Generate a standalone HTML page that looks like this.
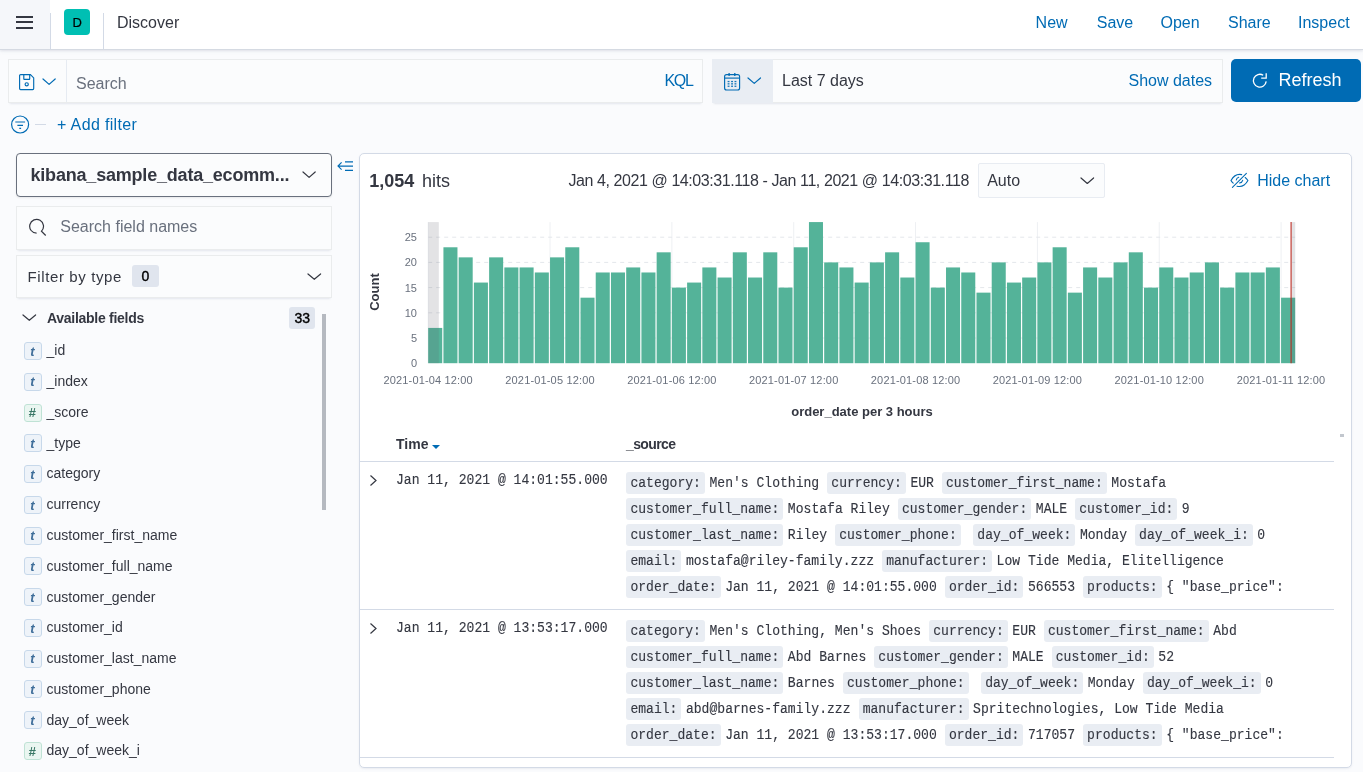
<!DOCTYPE html>
<html><head><meta charset="utf-8"><title>Discover - Kibana</title>
<style>
html,body{margin:0;padding:0;}
body{width:1363px;height:772px;overflow:hidden;position:relative;background:#FAFBFD;font-family:'Liberation Sans', sans-serif;}
</style></head><body>
<div id="root" style="position:absolute;left:0;top:0;width:1363px;height:772px;will-change:transform">
<div style="position:absolute;left:0;top:0;width:1363px;height:49px;background:#fff;border-bottom:1.5px solid #D5DAE2;box-shadow:0 1px 2px rgba(152,162,179,.2),0 2px 4px rgba(152,162,179,.08);z-index:2">
<div style="position:absolute;left:0;top:0;width:50px;height:49px;background:#F5F7FA;"></div>
<div style="position:absolute;left:50px;top:13px;width:1px;height:36px;background:#D3DAE6"></div>
<div style="position:absolute;left:103px;top:13px;width:1px;height:36px;background:#D3DAE6"></div>
<div style="position:absolute;left:16px;top:15.6px;width:17px;height:2px;background:#343741"></div>
<div style="position:absolute;left:16px;top:21.2px;width:17px;height:2px;background:#343741"></div>
<div style="position:absolute;left:16px;top:26.8px;width:17px;height:2px;background:#343741"></div>
<div style="position:absolute;left:64px;top:9px;width:26px;height:26px;border-radius:4px;background:#00BFB3;"></div>
<div style="position:absolute;left:72.6px;top:14.50px;font:400 13px/16px 'Liberation Sans', sans-serif;color:#000;white-space:pre;-webkit-text-stroke:0.2px #000;">D</div>
<div style="position:absolute;left:117px;top:12.66px;font:400 16px/20px 'Liberation Sans', sans-serif;color:#343741;white-space:pre;">Discover</div>
<div style="position:absolute;left:1035.6px;top:12.76px;font:400 16px/20px 'Liberation Sans', sans-serif;color:#006BB4;white-space:pre;">New</div>
<div style="position:absolute;left:1096.8px;top:12.76px;font:400 16px/20px 'Liberation Sans', sans-serif;color:#006BB4;white-space:pre;">Save</div>
<div style="position:absolute;left:1160.5px;top:12.76px;font:400 16px/20px 'Liberation Sans', sans-serif;color:#006BB4;white-space:pre;">Open</div>
<div style="position:absolute;left:1228px;top:12.76px;font:400 16px/20px 'Liberation Sans', sans-serif;color:#006BB4;white-space:pre;">Share</div>
<div style="position:absolute;left:1298px;top:12.76px;font:400 16px/20px 'Liberation Sans', sans-serif;color:#006BB4;white-space:pre;">Inspect</div>
</div>
<div style="position:absolute;left:7.5px;top:59.2px;width:695px;height:43.6px;background:#FBFCFD;box-shadow:0 1px 1px -1px rgba(152,162,179,.2),0 3px 2px -2px rgba(152,162,179,.2),inset 0 0 0 1px rgba(16,22,26,.07)"></div>
<div style="position:absolute;left:66px;top:60.2px;width:1px;height:41.6px;background:#E6EBF2"></div>
<svg style="position:absolute;left:18px;top:73px" width="17" height="18" viewBox="0 0 17 18">
<path d="M2.6 1.6h9.8l3.3 3.3v10.7a1 1 0 0 1-1 1H2.6a1 1 0 0 1-1-1V2.6a1 1 0 0 1 1-1z" fill="none" stroke="#006BB4" stroke-width="1.15"/>
<path d="M5.8 1.6v4.2a.6.6 0 0 0 .6.6h4.7a.6.6 0 0 0 .6-.6V1.6" fill="none" stroke="#006BB4" stroke-width="1.15"/>
<circle cx="8.7" cy="11.3" r="1.6" fill="none" stroke="#006BB4" stroke-width="1.15"/></svg>
<svg style="position:absolute;left:40.5px;top:77.2px" width="16.2" height="9.4" viewBox="0 0 16.2 9.4"><path d="M2 2l6.1 5.4 6.1 -5.4" fill="none" stroke="#006BB4" stroke-width="1.2" stroke-linecap="round" stroke-linejoin="round"/></svg>
<div style="position:absolute;left:76px;top:73.76px;font:400 16px/20px 'Liberation Sans', sans-serif;color:#69707D;white-space:pre;">Search</div>
<div style="position:absolute;left:664.4px;top:70.66px;font:400 16px/20px 'Liberation Sans', sans-serif;color:#006BB4;white-space:pre;letter-spacing:-1.2px;">KQL</div>
<div style="position:absolute;left:712px;top:59.2px;width:510.5px;height:44px;background:#FBFCFD;box-shadow:0 1px 1px -1px rgba(152,162,179,.2),0 3px 2px -2px rgba(152,162,179,.2),inset 0 0 0 1px rgba(16,22,26,.07)"></div>
<div style="position:absolute;left:712px;top:59.2px;width:61px;height:44px;background:#E9EDF3"></div>
<svg style="position:absolute;left:723px;top:72px" width="18" height="19" viewBox="0 0 18 19">
<rect x="1.6" y="2.6" width="15" height="15.4" rx="2" fill="none" stroke="#006BB4" stroke-width="1.15"/>
<path d="M1.6 6.1h15" stroke="#006BB4" stroke-width="1.15"/>
<path d="M6.1 1v3M11.8 1v3" stroke="#006BB4" stroke-width="1.3"/>
<g fill="#006BB4" opacity="0.9"><rect x="4.6" y="8.9" width="1.9" height="1.3"/><rect x="8.1" y="8.9" width="1.9" height="1.3"/><rect x="11.5" y="8.9" width="1.9" height="1.3"/>
<rect x="4.6" y="11.2" width="1.9" height="1.3"/><rect x="8.1" y="11.2" width="1.9" height="1.3"/><rect x="11.5" y="11.2" width="1.9" height="1.3"/>
<rect x="4.6" y="13.6" width="1.9" height="1.3"/><rect x="8.1" y="13.6" width="1.9" height="1.3"/><rect x="11.5" y="13.6" width="1.9" height="1.3"/></g></svg>
<svg style="position:absolute;left:745.7px;top:75.7px" width="16.5" height="9.4" viewBox="0 0 16.5 9.4"><path d="M2 2l6.25 5.4 6.25 -5.4" fill="none" stroke="#006BB4" stroke-width="1.2" stroke-linecap="round" stroke-linejoin="round"/></svg>
<div style="position:absolute;left:782px;top:70.66px;font:400 16px/20px 'Liberation Sans', sans-serif;color:#343741;white-space:pre;">Last 7 days</div>
<div style="position:absolute;left:1128.5px;top:70.76px;font:400 16px/20px 'Liberation Sans', sans-serif;color:#006BB4;white-space:pre;">Show dates</div>
<div style="position:absolute;left:1231px;top:59.3px;width:129.5px;height:43.2px;background:#006BB4;border-radius:5px"></div>
<svg style="position:absolute;left:1251px;top:71.5px" width="18" height="18" viewBox="0 0 18 18">
<path d="M15.2 9.4A6.4 6.4 0 1 1 12.2 3.2" fill="none" stroke="#fff" stroke-width="1.3"/>
<path d="M15.2 1.2v5h-5" fill="none" stroke="#fff" stroke-width="1.3"/></svg>
<div style="position:absolute;left:1278.5px;top:69.26px;font:400 18px/22px 'Liberation Sans', sans-serif;color:#fff;white-space:pre;">Refresh</div>
<svg style="position:absolute;left:10px;top:114px" width="21" height="21" viewBox="0 0 21 21">
<circle cx="10.1" cy="10.5" r="8.5" fill="none" stroke="#006BB4" stroke-width="1.2"/>
<path d="M5.3 8h9.8M7.4 11.4h5.6M9.3 14.3h1.8" stroke="#006BB4" stroke-width="1.2"/></svg>
<div style="position:absolute;left:35px;top:124px;width:11px;height:1px;background:#D3DAE6"></div>
<div style="position:absolute;left:57px;top:114.86px;font:400 16px/20px 'Liberation Sans', sans-serif;color:#006BB4;white-space:pre;letter-spacing:0.35px;">+ Add filter</div>
<div style="position:absolute;left:16px;top:153px;width:314px;height:42px;border:1px solid #69707D;border-radius:4px;background:#FBFCFD;box-shadow:0 1px 2px rgba(0,0,0,.08)"></div>
<div style="position:absolute;left:30.5px;top:164.06px;font:700 18px/22px 'Liberation Sans', sans-serif;color:#343741;white-space:pre;letter-spacing:-0.2px;">kibana_sample_data_ecomm...</div>
<svg style="position:absolute;left:301.4px;top:170.4px" width="16.2" height="9.4" viewBox="0 0 16.2 9.4"><path d="M2 2l6.1 5.4 6.1 -5.4" fill="none" stroke="#343741" stroke-width="1.2" stroke-linecap="round" stroke-linejoin="round"/></svg>
<svg style="position:absolute;left:337px;top:159px" width="17" height="14" viewBox="0 0 17 14">
<path d="M4.6 3.4L1 7.1l3.6 3.6M1 7.1h15M8 2.9h8M8 11.4h8" fill="none" stroke="#006BB4" stroke-width="1.15"/></svg>
<div style="position:absolute;left:16px;top:206px;width:316px;height:44px;background:#FBFCFD;box-shadow:0 1px 1px -1px rgba(152,162,179,.2),0 3px 2px -2px rgba(152,162,179,.2),inset 0 0 0 1px rgba(16,22,26,.07)"></div>
<svg style="position:absolute;left:28px;top:218px" width="19" height="19" viewBox="0 0 19 19">
<path d="M8.6 15.2A6.9 6.9 0 1 1 13.48 13.18L17.7 17.5" fill="none" stroke="#343741" stroke-width="1.2"/></svg>
<div style="position:absolute;left:60.3px;top:217.36px;font:400 16px/20px 'Liberation Sans', sans-serif;color:#69707D;white-space:pre;">Search field names</div>
<div style="position:absolute;left:16px;top:254.5px;width:316px;height:43px;background:#FBFCFD;box-shadow:0 1px 1px -1px rgba(152,162,179,.2),0 3px 2px -2px rgba(152,162,179,.2),inset 0 0 0 1px rgba(16,22,26,.07)"></div>
<div style="position:absolute;left:27.5px;top:267.20px;font:400 15px/19px 'Liberation Sans', sans-serif;color:#343741;white-space:pre;letter-spacing:0.62px;">Filter by type</div>
<div style="position:absolute;left:132px;top:265px;width:27px;height:21.8px;background:#E0E5EE;border-radius:3px"></div>
<div style="position:absolute;left:141.6px;top:267.15px;font:400 14px/18px 'Liberation Sans', sans-serif;color:#000;white-space:pre;-webkit-text-stroke:0.4px #000;">0</div>
<svg style="position:absolute;left:305.8px;top:271.9px" width="16.6" height="9.3" viewBox="0 0 16.6 9.3"><path d="M2 2l6.3 5.3 6.3 -5.3" fill="none" stroke="#343741" stroke-width="1.2" stroke-linecap="round" stroke-linejoin="round"/></svg>
<svg style="position:absolute;left:20.6px;top:313.2px" width="16.6" height="9.3" viewBox="0 0 16.6 9.3"><path d="M2 2l6.3 5.3 6.3 -5.3" fill="none" stroke="#343741" stroke-width="1.2" stroke-linecap="round" stroke-linejoin="round"/></svg>
<div style="position:absolute;left:47px;top:309.15px;font:700 14px/18px 'Liberation Sans', sans-serif;color:#343741;white-space:pre;letter-spacing:-0.28px;">Available fields</div>
<div style="position:absolute;left:289px;top:307px;width:26px;height:21.8px;background:#E0E5EE;border-radius:3px"></div>
<div style="position:absolute;left:294.5px;top:308.65px;font:400 14px/18px 'Liberation Sans', sans-serif;color:#000;white-space:pre;-webkit-text-stroke:0.4px #000;">33</div>
<div style="position:absolute;left:321.8px;top:314px;width:4px;height:196px;background:#B5B9C0"></div>
<div style="position:absolute;left:24.2px;top:342.00px;width:16px;height:16px;border:1px solid #C7D8EA;border-radius:3px;background:#EEF3F9"></div>
<div style="position:absolute;left:30.2px;top:343.70px;font:700 13px/16px 'Liberation Sans', sans-serif;color:#3F6E9A;white-space:pre;font-style:italic;">t</div>
<div style="position:absolute;left:46.5px;top:341.35px;font:400 14px/18px 'Liberation Sans', sans-serif;color:#343741;white-space:pre;">_id</div>
<div style="position:absolute;left:24.2px;top:372.77px;width:16px;height:16px;border:1px solid #C7D8EA;border-radius:3px;background:#EEF3F9"></div>
<div style="position:absolute;left:30.2px;top:374.47px;font:700 13px/16px 'Liberation Sans', sans-serif;color:#3F6E9A;white-space:pre;font-style:italic;">t</div>
<div style="position:absolute;left:46.5px;top:372.12px;font:400 14px/18px 'Liberation Sans', sans-serif;color:#343741;white-space:pre;">_index</div>
<div style="position:absolute;left:24.2px;top:403.54px;width:16px;height:16px;border:1px solid #BFE2D5;border-radius:3px;background:#EAF6F1"></div>
<div style="position:absolute;left:28.6px;top:405.04px;font:700 13px/16px 'Liberation Sans', sans-serif;color:#387765;white-space:pre;font-style:italic;">#</div>
<div style="position:absolute;left:46.5px;top:402.89px;font:400 14px/18px 'Liberation Sans', sans-serif;color:#343741;white-space:pre;">_score</div>
<div style="position:absolute;left:24.2px;top:434.31px;width:16px;height:16px;border:1px solid #C7D8EA;border-radius:3px;background:#EEF3F9"></div>
<div style="position:absolute;left:30.2px;top:436.01px;font:700 13px/16px 'Liberation Sans', sans-serif;color:#3F6E9A;white-space:pre;font-style:italic;">t</div>
<div style="position:absolute;left:46.5px;top:433.66px;font:400 14px/18px 'Liberation Sans', sans-serif;color:#343741;white-space:pre;">_type</div>
<div style="position:absolute;left:24.2px;top:465.08px;width:16px;height:16px;border:1px solid #C7D8EA;border-radius:3px;background:#EEF3F9"></div>
<div style="position:absolute;left:30.2px;top:466.78px;font:700 13px/16px 'Liberation Sans', sans-serif;color:#3F6E9A;white-space:pre;font-style:italic;">t</div>
<div style="position:absolute;left:46.5px;top:464.43px;font:400 14px/18px 'Liberation Sans', sans-serif;color:#343741;white-space:pre;">category</div>
<div style="position:absolute;left:24.2px;top:495.85px;width:16px;height:16px;border:1px solid #C7D8EA;border-radius:3px;background:#EEF3F9"></div>
<div style="position:absolute;left:30.2px;top:497.55px;font:700 13px/16px 'Liberation Sans', sans-serif;color:#3F6E9A;white-space:pre;font-style:italic;">t</div>
<div style="position:absolute;left:46.5px;top:495.20px;font:400 14px/18px 'Liberation Sans', sans-serif;color:#343741;white-space:pre;">currency</div>
<div style="position:absolute;left:24.2px;top:526.62px;width:16px;height:16px;border:1px solid #C7D8EA;border-radius:3px;background:#EEF3F9"></div>
<div style="position:absolute;left:30.2px;top:528.32px;font:700 13px/16px 'Liberation Sans', sans-serif;color:#3F6E9A;white-space:pre;font-style:italic;">t</div>
<div style="position:absolute;left:46.5px;top:525.97px;font:400 14px/18px 'Liberation Sans', sans-serif;color:#343741;white-space:pre;">customer_first_name</div>
<div style="position:absolute;left:24.2px;top:557.39px;width:16px;height:16px;border:1px solid #C7D8EA;border-radius:3px;background:#EEF3F9"></div>
<div style="position:absolute;left:30.2px;top:559.09px;font:700 13px/16px 'Liberation Sans', sans-serif;color:#3F6E9A;white-space:pre;font-style:italic;">t</div>
<div style="position:absolute;left:46.5px;top:556.74px;font:400 14px/18px 'Liberation Sans', sans-serif;color:#343741;white-space:pre;">customer_full_name</div>
<div style="position:absolute;left:24.2px;top:588.16px;width:16px;height:16px;border:1px solid #C7D8EA;border-radius:3px;background:#EEF3F9"></div>
<div style="position:absolute;left:30.2px;top:589.86px;font:700 13px/16px 'Liberation Sans', sans-serif;color:#3F6E9A;white-space:pre;font-style:italic;">t</div>
<div style="position:absolute;left:46.5px;top:587.51px;font:400 14px/18px 'Liberation Sans', sans-serif;color:#343741;white-space:pre;">customer_gender</div>
<div style="position:absolute;left:24.2px;top:618.93px;width:16px;height:16px;border:1px solid #C7D8EA;border-radius:3px;background:#EEF3F9"></div>
<div style="position:absolute;left:30.2px;top:620.63px;font:700 13px/16px 'Liberation Sans', sans-serif;color:#3F6E9A;white-space:pre;font-style:italic;">t</div>
<div style="position:absolute;left:46.5px;top:618.28px;font:400 14px/18px 'Liberation Sans', sans-serif;color:#343741;white-space:pre;">customer_id</div>
<div style="position:absolute;left:24.2px;top:649.70px;width:16px;height:16px;border:1px solid #C7D8EA;border-radius:3px;background:#EEF3F9"></div>
<div style="position:absolute;left:30.2px;top:651.40px;font:700 13px/16px 'Liberation Sans', sans-serif;color:#3F6E9A;white-space:pre;font-style:italic;">t</div>
<div style="position:absolute;left:46.5px;top:649.05px;font:400 14px/18px 'Liberation Sans', sans-serif;color:#343741;white-space:pre;">customer_last_name</div>
<div style="position:absolute;left:24.2px;top:680.47px;width:16px;height:16px;border:1px solid #C7D8EA;border-radius:3px;background:#EEF3F9"></div>
<div style="position:absolute;left:30.2px;top:682.17px;font:700 13px/16px 'Liberation Sans', sans-serif;color:#3F6E9A;white-space:pre;font-style:italic;">t</div>
<div style="position:absolute;left:46.5px;top:679.82px;font:400 14px/18px 'Liberation Sans', sans-serif;color:#343741;white-space:pre;">customer_phone</div>
<div style="position:absolute;left:24.2px;top:711.24px;width:16px;height:16px;border:1px solid #C7D8EA;border-radius:3px;background:#EEF3F9"></div>
<div style="position:absolute;left:30.2px;top:712.94px;font:700 13px/16px 'Liberation Sans', sans-serif;color:#3F6E9A;white-space:pre;font-style:italic;">t</div>
<div style="position:absolute;left:46.5px;top:710.59px;font:400 14px/18px 'Liberation Sans', sans-serif;color:#343741;white-space:pre;">day_of_week</div>
<div style="position:absolute;left:24.2px;top:742.01px;width:16px;height:16px;border:1px solid #BFE2D5;border-radius:3px;background:#EAF6F1"></div>
<div style="position:absolute;left:28.6px;top:743.51px;font:700 13px/16px 'Liberation Sans', sans-serif;color:#387765;white-space:pre;font-style:italic;">#</div>
<div style="position:absolute;left:46.5px;top:741.36px;font:400 14px/18px 'Liberation Sans', sans-serif;color:#343741;white-space:pre;">day_of_week_i</div>
<div style="position:absolute;left:359px;top:153px;width:990.5px;height:612.5px;background:#fff;border:1px solid #D3DAE6;border-radius:5px;box-shadow:0 1px 2px rgba(152,162,179,.15)"></div>
<div style="position:absolute;left:369.3px;top:169.76px;font:700 18px/22px 'Liberation Sans', sans-serif;color:#343741;white-space:pre;">1,054</div>
<div style="position:absolute;left:422px;top:169.76px;font:400 18px/22px 'Liberation Sans', sans-serif;color:#343741;white-space:pre;">hits</div>
<div style="position:absolute;left:568.5px;top:170.76px;font:400 16px/20px 'Liberation Sans', sans-serif;color:#343741;white-space:pre;letter-spacing:-0.42px;">Jan 4, 2021 @ 14:03:31.118 - Jan 11, 2021 @ 14:03:31.118</div>
<div style="position:absolute;left:978.2px;top:163.3px;width:124.4px;height:33.2px;border:1px solid #E8ECF2;background:#FBFCFD;border-radius:2px"></div>
<div style="position:absolute;left:987.2px;top:170.76px;font:400 16px/20px 'Liberation Sans', sans-serif;color:#343741;white-space:pre;">Auto</div>
<svg style="position:absolute;left:1078.6px;top:175.8px" width="16.6" height="9.5" viewBox="0 0 16.6 9.5"><path d="M2 2l6.3 5.5 6.3 -5.5" fill="none" stroke="#343741" stroke-width="1.2" stroke-linecap="round" stroke-linejoin="round"/></svg>
<svg style="position:absolute;left:1229px;top:170px" width="21" height="20" viewBox="0 0 21 20">
<g fill="none" stroke="#006BB4" stroke-width="1.1" stroke-linecap="round">
<path d="M4.2 13.2C3 12.2 2.4 11.3 2 10.5C4 7 7 4.4 10.5 4.4C11.3 4.4 12 4.5 12.7 4.6"/>
<path d="M16.2 7.5C17.4 8.4 18.2 9.4 18.9 10.5C17 14 14 16.5 10.5 16.5C9.6 16.5 8.8 16.4 8 16.2"/>
<path d="M7.3 10C7.5 8.6 8.4 7.6 9.7 7.2M10.5 13C12 12.8 13.3 11.8 13.7 10.3"/>
<path d="M3.4 17.3L17.4 3.4"/></g></svg>
<div style="position:absolute;left:1257.2px;top:170.76px;font:400 16px/20px 'Liberation Sans', sans-serif;color:#006BB4;white-space:pre;">Hide chart</div>
<svg style="position:absolute;left:0;top:0" width="1363" height="772">
<line x1="428.20" y1="222.08" x2="428.20" y2="363.2" stroke="#EEF0F3" stroke-width="1"/>
<line x1="550.04" y1="222.08" x2="550.04" y2="363.2" stroke="#EEF0F3" stroke-width="1"/>
<line x1="671.88" y1="222.08" x2="671.88" y2="363.2" stroke="#EEF0F3" stroke-width="1"/>
<line x1="793.72" y1="222.08" x2="793.72" y2="363.2" stroke="#EEF0F3" stroke-width="1"/>
<line x1="915.56" y1="222.08" x2="915.56" y2="363.2" stroke="#EEF0F3" stroke-width="1"/>
<line x1="1037.40" y1="222.08" x2="1037.40" y2="363.2" stroke="#EEF0F3" stroke-width="1"/>
<line x1="1159.24" y1="222.08" x2="1159.24" y2="363.2" stroke="#EEF0F3" stroke-width="1"/>
<line x1="1281.08" y1="222.08" x2="1281.08" y2="363.2" stroke="#EEF0F3" stroke-width="1"/>
<line x1="428.2" y1="338.00" x2="1295.2" y2="338.00" stroke="#E4E7EB" stroke-width="1" stroke-dasharray="4 4"/>
<line x1="428.2" y1="312.80" x2="1295.2" y2="312.80" stroke="#E4E7EB" stroke-width="1" stroke-dasharray="4 4"/>
<line x1="428.2" y1="287.60" x2="1295.2" y2="287.60" stroke="#E4E7EB" stroke-width="1" stroke-dasharray="4 4"/>
<line x1="428.2" y1="262.40" x2="1295.2" y2="262.40" stroke="#E4E7EB" stroke-width="1" stroke-dasharray="4 4"/>
<line x1="428.2" y1="237.20" x2="1295.2" y2="237.20" stroke="#E4E7EB" stroke-width="1" stroke-dasharray="4 4"/>
<rect x="428.20" y="327.92" width="14.03" height="35.28" fill="#54B399"/>
<rect x="443.43" y="247.28" width="14.03" height="115.92" fill="#54B399"/>
<rect x="458.66" y="257.36" width="14.03" height="105.84" fill="#54B399"/>
<rect x="473.89" y="282.56" width="14.03" height="80.64" fill="#54B399"/>
<rect x="489.12" y="257.36" width="14.03" height="105.84" fill="#54B399"/>
<rect x="504.35" y="267.44" width="14.03" height="95.76" fill="#54B399"/>
<rect x="519.58" y="267.44" width="14.03" height="95.76" fill="#54B399"/>
<rect x="534.81" y="272.48" width="14.03" height="90.72" fill="#54B399"/>
<rect x="550.04" y="257.36" width="14.03" height="105.84" fill="#54B399"/>
<rect x="565.27" y="247.28" width="14.03" height="115.92" fill="#54B399"/>
<rect x="580.50" y="297.68" width="14.03" height="65.52" fill="#54B399"/>
<rect x="595.73" y="272.48" width="14.03" height="90.72" fill="#54B399"/>
<rect x="610.96" y="272.48" width="14.03" height="90.72" fill="#54B399"/>
<rect x="626.19" y="267.44" width="14.03" height="95.76" fill="#54B399"/>
<rect x="641.42" y="272.48" width="14.03" height="90.72" fill="#54B399"/>
<rect x="656.65" y="252.32" width="14.03" height="110.88" fill="#54B399"/>
<rect x="671.88" y="287.60" width="14.03" height="75.60" fill="#54B399"/>
<rect x="687.11" y="282.56" width="14.03" height="80.64" fill="#54B399"/>
<rect x="702.34" y="267.44" width="14.03" height="95.76" fill="#54B399"/>
<rect x="717.57" y="277.52" width="14.03" height="85.68" fill="#54B399"/>
<rect x="732.80" y="252.32" width="14.03" height="110.88" fill="#54B399"/>
<rect x="748.03" y="277.52" width="14.03" height="85.68" fill="#54B399"/>
<rect x="763.26" y="252.32" width="14.03" height="110.88" fill="#54B399"/>
<rect x="778.49" y="287.60" width="14.03" height="75.60" fill="#54B399"/>
<rect x="793.72" y="247.28" width="14.03" height="115.92" fill="#54B399"/>
<rect x="808.95" y="222.08" width="14.03" height="141.12" fill="#54B399"/>
<rect x="824.18" y="262.40" width="14.03" height="100.80" fill="#54B399"/>
<rect x="839.41" y="267.44" width="14.03" height="95.76" fill="#54B399"/>
<rect x="854.64" y="282.56" width="14.03" height="80.64" fill="#54B399"/>
<rect x="869.87" y="262.40" width="14.03" height="100.80" fill="#54B399"/>
<rect x="885.10" y="252.32" width="14.03" height="110.88" fill="#54B399"/>
<rect x="900.33" y="277.52" width="14.03" height="85.68" fill="#54B399"/>
<rect x="915.56" y="242.24" width="14.03" height="120.96" fill="#54B399"/>
<rect x="930.79" y="287.60" width="14.03" height="75.60" fill="#54B399"/>
<rect x="946.02" y="267.44" width="14.03" height="95.76" fill="#54B399"/>
<rect x="961.25" y="272.48" width="14.03" height="90.72" fill="#54B399"/>
<rect x="976.48" y="292.64" width="14.03" height="70.56" fill="#54B399"/>
<rect x="991.71" y="262.40" width="14.03" height="100.80" fill="#54B399"/>
<rect x="1006.94" y="282.56" width="14.03" height="80.64" fill="#54B399"/>
<rect x="1022.17" y="277.52" width="14.03" height="85.68" fill="#54B399"/>
<rect x="1037.40" y="262.40" width="14.03" height="100.80" fill="#54B399"/>
<rect x="1052.63" y="247.28" width="14.03" height="115.92" fill="#54B399"/>
<rect x="1067.86" y="292.64" width="14.03" height="70.56" fill="#54B399"/>
<rect x="1083.09" y="267.44" width="14.03" height="95.76" fill="#54B399"/>
<rect x="1098.32" y="277.52" width="14.03" height="85.68" fill="#54B399"/>
<rect x="1113.55" y="262.40" width="14.03" height="100.80" fill="#54B399"/>
<rect x="1128.78" y="252.32" width="14.03" height="110.88" fill="#54B399"/>
<rect x="1144.01" y="287.60" width="14.03" height="75.60" fill="#54B399"/>
<rect x="1159.24" y="267.44" width="14.03" height="95.76" fill="#54B399"/>
<rect x="1174.47" y="277.52" width="14.03" height="85.68" fill="#54B399"/>
<rect x="1189.70" y="272.48" width="14.03" height="90.72" fill="#54B399"/>
<rect x="1204.93" y="262.40" width="14.03" height="100.80" fill="#54B399"/>
<rect x="1220.16" y="287.60" width="14.03" height="75.60" fill="#54B399"/>
<rect x="1235.39" y="272.48" width="14.03" height="90.72" fill="#54B399"/>
<rect x="1250.62" y="272.48" width="14.03" height="90.72" fill="#54B399"/>
<rect x="1265.85" y="267.44" width="14.03" height="95.76" fill="#54B399"/>
<rect x="1281.08" y="297.68" width="14.12" height="65.52" fill="#54B399"/>
<rect x="428.2" y="222.08" width="10.60" height="141.12" fill="rgba(100,100,110,0.18)"/>
<rect x="1291" y="222.08" width="4.2" height="141.12" fill="rgba(100,100,110,0.18)"/>
<line x1="1291.1" y1="222.08" x2="1291.1" y2="363.2" stroke="#BD271E" stroke-width="1.5" opacity="0.7"/>
</svg>
<div style="position:absolute;left:380px;width:37px;text-align:right;top:356.20px;font:400 11px/14px 'Liberation Sans', sans-serif;color:#69707D">0</div>
<div style="position:absolute;left:380px;width:37px;text-align:right;top:331.00px;font:400 11px/14px 'Liberation Sans', sans-serif;color:#69707D">5</div>
<div style="position:absolute;left:380px;width:37px;text-align:right;top:305.80px;font:400 11px/14px 'Liberation Sans', sans-serif;color:#69707D">10</div>
<div style="position:absolute;left:380px;width:37px;text-align:right;top:280.60px;font:400 11px/14px 'Liberation Sans', sans-serif;color:#69707D">15</div>
<div style="position:absolute;left:380px;width:37px;text-align:right;top:255.40px;font:400 11px/14px 'Liberation Sans', sans-serif;color:#69707D">20</div>
<div style="position:absolute;left:380px;width:37px;text-align:right;top:230.20px;font:400 11px/14px 'Liberation Sans', sans-serif;color:#69707D">25</div>
<div style="position:absolute;left:345.2px;top:284.2px;width:60px;text-align:center;font:700 13px/16px 'Liberation Sans', sans-serif;color:#343741;transform:rotate(-90deg)">Count</div>
<div style="position:absolute;left:368.20px;width:120px;text-align:center;white-space:nowrap;top:372.60px;font:400 11px/14px 'Liberation Sans', sans-serif;letter-spacing:0.16px;color:#69707D">2021-01-04 12:00</div>
<div style="position:absolute;left:490.04px;width:120px;text-align:center;white-space:nowrap;top:372.60px;font:400 11px/14px 'Liberation Sans', sans-serif;letter-spacing:0.16px;color:#69707D">2021-01-05 12:00</div>
<div style="position:absolute;left:611.88px;width:120px;text-align:center;white-space:nowrap;top:372.60px;font:400 11px/14px 'Liberation Sans', sans-serif;letter-spacing:0.16px;color:#69707D">2021-01-06 12:00</div>
<div style="position:absolute;left:733.72px;width:120px;text-align:center;white-space:nowrap;top:372.60px;font:400 11px/14px 'Liberation Sans', sans-serif;letter-spacing:0.16px;color:#69707D">2021-01-07 12:00</div>
<div style="position:absolute;left:855.56px;width:120px;text-align:center;white-space:nowrap;top:372.60px;font:400 11px/14px 'Liberation Sans', sans-serif;letter-spacing:0.16px;color:#69707D">2021-01-08 12:00</div>
<div style="position:absolute;left:977.40px;width:120px;text-align:center;white-space:nowrap;top:372.60px;font:400 11px/14px 'Liberation Sans', sans-serif;letter-spacing:0.16px;color:#69707D">2021-01-09 12:00</div>
<div style="position:absolute;left:1099.24px;width:120px;text-align:center;white-space:nowrap;top:372.60px;font:400 11px/14px 'Liberation Sans', sans-serif;letter-spacing:0.16px;color:#69707D">2021-01-10 12:00</div>
<div style="position:absolute;left:1221.08px;width:120px;text-align:center;white-space:nowrap;top:372.60px;font:400 11px/14px 'Liberation Sans', sans-serif;letter-spacing:0.16px;color:#69707D">2021-01-11 12:00</div>
<div style="position:absolute;left:762px;width:200px;text-align:center;top:403.60px;font:700 13px/16px 'Liberation Sans', sans-serif;color:#343741">order_date per 3 hours</div>
<div style="position:absolute;left:396px;top:434.95px;font:700 14px/18px 'Liberation Sans', sans-serif;color:#343741;white-space:pre;">Time</div>
<svg style="position:absolute;left:431px;top:444px" width="10" height="6" viewBox="0 0 10 6"><path d="M1 1h8l-4 4z" fill="#006BB4"/></svg>
<div style="position:absolute;left:626px;top:434.95px;font:700 14px/18px 'Liberation Sans', sans-serif;color:#343741;white-space:pre;letter-spacing:-0.6px;">_source</div>
<div style="position:absolute;left:360px;top:461px;width:974px;height:1px;background:#D3DAE6"></div>
<div style="position:absolute;left:360px;top:609px;width:974px;height:1px;background:#D3DAE6"></div>
<div style="position:absolute;left:360px;top:757px;width:974px;height:1px;background:#D3DAE6"></div>
<div style="position:absolute;left:1340px;top:433.5px;width:4px;height:3px;background:#C2C7CE"></div>
<svg style="position:absolute;left:369px;top:473.5px" width="9" height="13" viewBox="0 0 9 13"><path d="M1.5 1.5l5.5 5-5.5 5" fill="none" stroke="#343741" stroke-width="1.2"/></svg>
<div style="position:absolute;left:396px;top:472.92px;font:400 13.07px/16px 'Liberation Mono', monospace;color:#343741;white-space:pre;-webkit-text-stroke:0.12px #343741;transform:scaleY(1.08);transform-origin:0 11.48px;">Jan 11, 2021 @ 14:01:55.000</div>
<div style="position:absolute;left:626.40px;top:472.30px;width:78.56px;height:21.4px;background:#E9EDF3;border-radius:3px"></div>
<div style="position:absolute;left:630.4px;top:476.32px;font:400 13.07px/16px 'Liberation Mono', monospace;color:#343741;white-space:pre;-webkit-text-stroke:0.12px #343741;transform:scaleY(1.08);transform-origin:0 11.48px;">category:</div>
<div style="position:absolute;left:709.46px;top:476.32px;font:400 13.07px/16px 'Liberation Mono', monospace;color:#343741;white-space:pre;-webkit-text-stroke:0.12px #343741;transform:scaleY(1.08);transform-origin:0 11.48px;">Men's Clothing</div>
<div style="position:absolute;left:827.32px;top:472.30px;width:78.56px;height:21.4px;background:#E9EDF3;border-radius:3px"></div>
<div style="position:absolute;left:831.32px;top:476.32px;font:400 13.07px/16px 'Liberation Mono', monospace;color:#343741;white-space:pre;-webkit-text-stroke:0.12px #343741;transform:scaleY(1.08);transform-origin:0 11.48px;">currency:</div>
<div style="position:absolute;left:910.3800000000001px;top:476.32px;font:400 13.07px/16px 'Liberation Mono', monospace;color:#343741;white-space:pre;-webkit-text-stroke:0.12px #343741;transform:scaleY(1.08);transform-origin:0 11.48px;">EUR</div>
<div style="position:absolute;left:942.00px;top:472.30px;width:164.80px;height:21.4px;background:#E9EDF3;border-radius:3px"></div>
<div style="position:absolute;left:946.0000000000001px;top:476.32px;font:400 13.07px/16px 'Liberation Mono', monospace;color:#343741;white-space:pre;-webkit-text-stroke:0.12px #343741;transform:scaleY(1.08);transform-origin:0 11.48px;">customer_first_name:</div>
<div style="position:absolute;left:1111.3000000000002px;top:476.32px;font:400 13.07px/16px 'Liberation Mono', monospace;color:#343741;white-space:pre;-webkit-text-stroke:0.12px #343741;transform:scaleY(1.08);transform-origin:0 11.48px;">Mostafa</div>
<div style="position:absolute;left:626.40px;top:498.30px;width:156.96px;height:21.4px;background:#E9EDF3;border-radius:3px"></div>
<div style="position:absolute;left:630.4px;top:502.32px;font:400 13.07px/16px 'Liberation Mono', monospace;color:#343741;white-space:pre;-webkit-text-stroke:0.12px #343741;transform:scaleY(1.08);transform-origin:0 11.48px;">customer_full_name:</div>
<div style="position:absolute;left:787.86px;top:502.32px;font:400 13.07px/16px 'Liberation Mono', monospace;color:#343741;white-space:pre;-webkit-text-stroke:0.12px #343741;transform:scaleY(1.08);transform-origin:0 11.48px;">Mostafa Riley</div>
<div style="position:absolute;left:897.88px;top:498.30px;width:133.44px;height:21.4px;background:#E9EDF3;border-radius:3px"></div>
<div style="position:absolute;left:901.88px;top:502.32px;font:400 13.07px/16px 'Liberation Mono', monospace;color:#343741;white-space:pre;-webkit-text-stroke:0.12px #343741;transform:scaleY(1.08);transform-origin:0 11.48px;">customer_gender:</div>
<div style="position:absolute;left:1035.82px;top:502.32px;font:400 13.07px/16px 'Liberation Mono', monospace;color:#343741;white-space:pre;-webkit-text-stroke:0.12px #343741;transform:scaleY(1.08);transform-origin:0 11.48px;">MALE</div>
<div style="position:absolute;left:1075.28px;top:498.30px;width:102.08px;height:21.4px;background:#E9EDF3;border-radius:3px"></div>
<div style="position:absolute;left:1079.2799999999997px;top:502.32px;font:400 13.07px/16px 'Liberation Mono', monospace;color:#343741;white-space:pre;-webkit-text-stroke:0.12px #343741;transform:scaleY(1.08);transform-origin:0 11.48px;">customer_id:</div>
<div style="position:absolute;left:1181.8599999999997px;top:502.32px;font:400 13.07px/16px 'Liberation Mono', monospace;color:#343741;white-space:pre;-webkit-text-stroke:0.12px #343741;transform:scaleY(1.08);transform-origin:0 11.48px;">9</div>
<div style="position:absolute;left:626.40px;top:524.30px;width:156.96px;height:21.4px;background:#E9EDF3;border-radius:3px"></div>
<div style="position:absolute;left:630.4px;top:528.32px;font:400 13.07px/16px 'Liberation Mono', monospace;color:#343741;white-space:pre;-webkit-text-stroke:0.12px #343741;transform:scaleY(1.08);transform-origin:0 11.48px;">customer_last_name:</div>
<div style="position:absolute;left:787.86px;top:528.32px;font:400 13.07px/16px 'Liberation Mono', monospace;color:#343741;white-space:pre;-webkit-text-stroke:0.12px #343741;transform:scaleY(1.08);transform-origin:0 11.48px;">Riley</div>
<div style="position:absolute;left:835.16px;top:524.30px;width:125.60px;height:21.4px;background:#E9EDF3;border-radius:3px"></div>
<div style="position:absolute;left:839.1600000000001px;top:528.32px;font:400 13.07px/16px 'Liberation Mono', monospace;color:#343741;white-space:pre;-webkit-text-stroke:0.12px #343741;transform:scaleY(1.08);transform-origin:0 11.48px;">customer_phone:</div>
<div style="position:absolute;left:973.36px;top:524.30px;width:102.08px;height:21.4px;background:#E9EDF3;border-radius:3px"></div>
<div style="position:absolute;left:977.3600000000001px;top:528.32px;font:400 13.07px/16px 'Liberation Mono', monospace;color:#343741;white-space:pre;-webkit-text-stroke:0.12px #343741;transform:scaleY(1.08);transform-origin:0 11.48px;">day_of_week:</div>
<div style="position:absolute;left:1079.94px;top:528.32px;font:400 13.07px/16px 'Liberation Mono', monospace;color:#343741;white-space:pre;-webkit-text-stroke:0.12px #343741;transform:scaleY(1.08);transform-origin:0 11.48px;">Monday</div>
<div style="position:absolute;left:1135.08px;top:524.30px;width:117.76px;height:21.4px;background:#E9EDF3;border-radius:3px"></div>
<div style="position:absolute;left:1139.08px;top:528.32px;font:400 13.07px/16px 'Liberation Mono', monospace;color:#343741;white-space:pre;-webkit-text-stroke:0.12px #343741;transform:scaleY(1.08);transform-origin:0 11.48px;">day_of_week_i:</div>
<div style="position:absolute;left:1257.34px;top:528.32px;font:400 13.07px/16px 'Liberation Mono', monospace;color:#343741;white-space:pre;-webkit-text-stroke:0.12px #343741;transform:scaleY(1.08);transform-origin:0 11.48px;">0</div>
<div style="position:absolute;left:626.40px;top:550.30px;width:55.04px;height:21.4px;background:#E9EDF3;border-radius:3px"></div>
<div style="position:absolute;left:630.4px;top:554.32px;font:400 13.07px/16px 'Liberation Mono', monospace;color:#343741;white-space:pre;-webkit-text-stroke:0.12px #343741;transform:scaleY(1.08);transform-origin:0 11.48px;">email:</div>
<div style="position:absolute;left:685.9399999999999px;top:554.32px;font:400 13.07px/16px 'Liberation Mono', monospace;color:#343741;white-space:pre;-webkit-text-stroke:0.12px #343741;transform:scaleY(1.08);transform-origin:0 11.48px;">mostafa@riley-family.zzz</div>
<div style="position:absolute;left:882.20px;top:550.30px;width:109.92px;height:21.4px;background:#E9EDF3;border-radius:3px"></div>
<div style="position:absolute;left:886.1999999999999px;top:554.32px;font:400 13.07px/16px 'Liberation Mono', monospace;color:#343741;white-space:pre;-webkit-text-stroke:0.12px #343741;transform:scaleY(1.08);transform-origin:0 11.48px;">manufacturer:</div>
<div style="position:absolute;left:996.6199999999999px;top:554.32px;font:400 13.07px/16px 'Liberation Mono', monospace;color:#343741;white-space:pre;-webkit-text-stroke:0.12px #343741;transform:scaleY(1.08);transform-origin:0 11.48px;">Low Tide Media, Elitelligence</div>
<div style="position:absolute;left:626.40px;top:576.30px;width:94.24px;height:21.4px;background:#E9EDF3;border-radius:3px"></div>
<div style="position:absolute;left:630.4px;top:580.32px;font:400 13.07px/16px 'Liberation Mono', monospace;color:#343741;white-space:pre;-webkit-text-stroke:0.12px #343741;transform:scaleY(1.08);transform-origin:0 11.48px;">order_date:</div>
<div style="position:absolute;left:725.14px;top:580.32px;font:400 13.07px/16px 'Liberation Mono', monospace;color:#343741;white-space:pre;-webkit-text-stroke:0.12px #343741;transform:scaleY(1.08);transform-origin:0 11.48px;">Jan 11, 2021 @ 14:01:55.000</div>
<div style="position:absolute;left:944.92px;top:576.30px;width:78.56px;height:21.4px;background:#E9EDF3;border-radius:3px"></div>
<div style="position:absolute;left:948.92px;top:580.32px;font:400 13.07px/16px 'Liberation Mono', monospace;color:#343741;white-space:pre;-webkit-text-stroke:0.12px #343741;transform:scaleY(1.08);transform-origin:0 11.48px;">order_id:</div>
<div style="position:absolute;left:1027.98px;top:580.32px;font:400 13.07px/16px 'Liberation Mono', monospace;color:#343741;white-space:pre;-webkit-text-stroke:0.12px #343741;transform:scaleY(1.08);transform-origin:0 11.48px;">566553</div>
<div style="position:absolute;left:1083.12px;top:576.30px;width:78.56px;height:21.4px;background:#E9EDF3;border-radius:3px"></div>
<div style="position:absolute;left:1087.12px;top:580.32px;font:400 13.07px/16px 'Liberation Mono', monospace;color:#343741;white-space:pre;-webkit-text-stroke:0.12px #343741;transform:scaleY(1.08);transform-origin:0 11.48px;">products:</div>
<div style="position:absolute;left:1166.1799999999998px;top:580.32px;font:400 13.07px/16px 'Liberation Mono', monospace;color:#343741;white-space:pre;-webkit-text-stroke:0.12px #343741;transform:scaleY(1.08);transform-origin:0 11.48px;">{ "base_price":</div>
<svg style="position:absolute;left:369px;top:621.5px" width="9" height="13" viewBox="0 0 9 13"><path d="M1.5 1.5l5.5 5-5.5 5" fill="none" stroke="#343741" stroke-width="1.2"/></svg>
<div style="position:absolute;left:396px;top:620.92px;font:400 13.07px/16px 'Liberation Mono', monospace;color:#343741;white-space:pre;-webkit-text-stroke:0.12px #343741;transform:scaleY(1.08);transform-origin:0 11.48px;">Jan 11, 2021 @ 13:53:17.000</div>
<div style="position:absolute;left:626.40px;top:620.30px;width:78.56px;height:21.4px;background:#E9EDF3;border-radius:3px"></div>
<div style="position:absolute;left:630.4px;top:624.32px;font:400 13.07px/16px 'Liberation Mono', monospace;color:#343741;white-space:pre;-webkit-text-stroke:0.12px #343741;transform:scaleY(1.08);transform-origin:0 11.48px;">category:</div>
<div style="position:absolute;left:709.46px;top:624.32px;font:400 13.07px/16px 'Liberation Mono', monospace;color:#343741;white-space:pre;-webkit-text-stroke:0.12px #343741;transform:scaleY(1.08);transform-origin:0 11.48px;">Men's Clothing, Men's Shoes</div>
<div style="position:absolute;left:929.24px;top:620.30px;width:78.56px;height:21.4px;background:#E9EDF3;border-radius:3px"></div>
<div style="position:absolute;left:933.2400000000001px;top:624.32px;font:400 13.07px/16px 'Liberation Mono', monospace;color:#343741;white-space:pre;-webkit-text-stroke:0.12px #343741;transform:scaleY(1.08);transform-origin:0 11.48px;">currency:</div>
<div style="position:absolute;left:1012.3000000000002px;top:624.32px;font:400 13.07px/16px 'Liberation Mono', monospace;color:#343741;white-space:pre;-webkit-text-stroke:0.12px #343741;transform:scaleY(1.08);transform-origin:0 11.48px;">EUR</div>
<div style="position:absolute;left:1043.92px;top:620.30px;width:164.80px;height:21.4px;background:#E9EDF3;border-radius:3px"></div>
<div style="position:absolute;left:1047.92px;top:624.32px;font:400 13.07px/16px 'Liberation Mono', monospace;color:#343741;white-space:pre;-webkit-text-stroke:0.12px #343741;transform:scaleY(1.08);transform-origin:0 11.48px;">customer_first_name:</div>
<div style="position:absolute;left:1213.22px;top:624.32px;font:400 13.07px/16px 'Liberation Mono', monospace;color:#343741;white-space:pre;-webkit-text-stroke:0.12px #343741;transform:scaleY(1.08);transform-origin:0 11.48px;">Abd</div>
<div style="position:absolute;left:626.40px;top:646.30px;width:156.96px;height:21.4px;background:#E9EDF3;border-radius:3px"></div>
<div style="position:absolute;left:630.4px;top:650.32px;font:400 13.07px/16px 'Liberation Mono', monospace;color:#343741;white-space:pre;-webkit-text-stroke:0.12px #343741;transform:scaleY(1.08);transform-origin:0 11.48px;">customer_full_name:</div>
<div style="position:absolute;left:787.86px;top:650.32px;font:400 13.07px/16px 'Liberation Mono', monospace;color:#343741;white-space:pre;-webkit-text-stroke:0.12px #343741;transform:scaleY(1.08);transform-origin:0 11.48px;">Abd Barnes</div>
<div style="position:absolute;left:874.36px;top:646.30px;width:133.44px;height:21.4px;background:#E9EDF3;border-radius:3px"></div>
<div style="position:absolute;left:878.36px;top:650.32px;font:400 13.07px/16px 'Liberation Mono', monospace;color:#343741;white-space:pre;-webkit-text-stroke:0.12px #343741;transform:scaleY(1.08);transform-origin:0 11.48px;">customer_gender:</div>
<div style="position:absolute;left:1012.3px;top:650.32px;font:400 13.07px/16px 'Liberation Mono', monospace;color:#343741;white-space:pre;-webkit-text-stroke:0.12px #343741;transform:scaleY(1.08);transform-origin:0 11.48px;">MALE</div>
<div style="position:absolute;left:1051.76px;top:646.30px;width:102.08px;height:21.4px;background:#E9EDF3;border-radius:3px"></div>
<div style="position:absolute;left:1055.7599999999998px;top:650.32px;font:400 13.07px/16px 'Liberation Mono', monospace;color:#343741;white-space:pre;-webkit-text-stroke:0.12px #343741;transform:scaleY(1.08);transform-origin:0 11.48px;">customer_id:</div>
<div style="position:absolute;left:1158.3399999999997px;top:650.32px;font:400 13.07px/16px 'Liberation Mono', monospace;color:#343741;white-space:pre;-webkit-text-stroke:0.12px #343741;transform:scaleY(1.08);transform-origin:0 11.48px;">52</div>
<div style="position:absolute;left:626.40px;top:672.30px;width:156.96px;height:21.4px;background:#E9EDF3;border-radius:3px"></div>
<div style="position:absolute;left:630.4px;top:676.32px;font:400 13.07px/16px 'Liberation Mono', monospace;color:#343741;white-space:pre;-webkit-text-stroke:0.12px #343741;transform:scaleY(1.08);transform-origin:0 11.48px;">customer_last_name:</div>
<div style="position:absolute;left:787.86px;top:676.32px;font:400 13.07px/16px 'Liberation Mono', monospace;color:#343741;white-space:pre;-webkit-text-stroke:0.12px #343741;transform:scaleY(1.08);transform-origin:0 11.48px;">Barnes</div>
<div style="position:absolute;left:843.00px;top:672.30px;width:125.60px;height:21.4px;background:#E9EDF3;border-radius:3px"></div>
<div style="position:absolute;left:847.0px;top:676.32px;font:400 13.07px/16px 'Liberation Mono', monospace;color:#343741;white-space:pre;-webkit-text-stroke:0.12px #343741;transform:scaleY(1.08);transform-origin:0 11.48px;">customer_phone:</div>
<div style="position:absolute;left:981.20px;top:672.30px;width:102.08px;height:21.4px;background:#E9EDF3;border-radius:3px"></div>
<div style="position:absolute;left:985.2px;top:676.32px;font:400 13.07px/16px 'Liberation Mono', monospace;color:#343741;white-space:pre;-webkit-text-stroke:0.12px #343741;transform:scaleY(1.08);transform-origin:0 11.48px;">day_of_week:</div>
<div style="position:absolute;left:1087.78px;top:676.32px;font:400 13.07px/16px 'Liberation Mono', monospace;color:#343741;white-space:pre;-webkit-text-stroke:0.12px #343741;transform:scaleY(1.08);transform-origin:0 11.48px;">Monday</div>
<div style="position:absolute;left:1142.92px;top:672.30px;width:117.76px;height:21.4px;background:#E9EDF3;border-radius:3px"></div>
<div style="position:absolute;left:1146.9199999999998px;top:676.32px;font:400 13.07px/16px 'Liberation Mono', monospace;color:#343741;white-space:pre;-webkit-text-stroke:0.12px #343741;transform:scaleY(1.08);transform-origin:0 11.48px;">day_of_week_i:</div>
<div style="position:absolute;left:1265.1799999999998px;top:676.32px;font:400 13.07px/16px 'Liberation Mono', monospace;color:#343741;white-space:pre;-webkit-text-stroke:0.12px #343741;transform:scaleY(1.08);transform-origin:0 11.48px;">0</div>
<div style="position:absolute;left:626.40px;top:698.30px;width:55.04px;height:21.4px;background:#E9EDF3;border-radius:3px"></div>
<div style="position:absolute;left:630.4px;top:702.32px;font:400 13.07px/16px 'Liberation Mono', monospace;color:#343741;white-space:pre;-webkit-text-stroke:0.12px #343741;transform:scaleY(1.08);transform-origin:0 11.48px;">email:</div>
<div style="position:absolute;left:685.9399999999999px;top:702.32px;font:400 13.07px/16px 'Liberation Mono', monospace;color:#343741;white-space:pre;-webkit-text-stroke:0.12px #343741;transform:scaleY(1.08);transform-origin:0 11.48px;">abd@barnes-family.zzz</div>
<div style="position:absolute;left:858.68px;top:698.30px;width:109.92px;height:21.4px;background:#E9EDF3;border-radius:3px"></div>
<div style="position:absolute;left:862.68px;top:702.32px;font:400 13.07px/16px 'Liberation Mono', monospace;color:#343741;white-space:pre;-webkit-text-stroke:0.12px #343741;transform:scaleY(1.08);transform-origin:0 11.48px;">manufacturer:</div>
<div style="position:absolute;left:973.0999999999999px;top:702.32px;font:400 13.07px/16px 'Liberation Mono', monospace;color:#343741;white-space:pre;-webkit-text-stroke:0.12px #343741;transform:scaleY(1.08);transform-origin:0 11.48px;">Spritechnologies, Low Tide Media</div>
<div style="position:absolute;left:626.40px;top:724.30px;width:94.24px;height:21.4px;background:#E9EDF3;border-radius:3px"></div>
<div style="position:absolute;left:630.4px;top:728.32px;font:400 13.07px/16px 'Liberation Mono', monospace;color:#343741;white-space:pre;-webkit-text-stroke:0.12px #343741;transform:scaleY(1.08);transform-origin:0 11.48px;">order_date:</div>
<div style="position:absolute;left:725.14px;top:728.32px;font:400 13.07px/16px 'Liberation Mono', monospace;color:#343741;white-space:pre;-webkit-text-stroke:0.12px #343741;transform:scaleY(1.08);transform-origin:0 11.48px;">Jan 11, 2021 @ 13:53:17.000</div>
<div style="position:absolute;left:944.92px;top:724.30px;width:78.56px;height:21.4px;background:#E9EDF3;border-radius:3px"></div>
<div style="position:absolute;left:948.92px;top:728.32px;font:400 13.07px/16px 'Liberation Mono', monospace;color:#343741;white-space:pre;-webkit-text-stroke:0.12px #343741;transform:scaleY(1.08);transform-origin:0 11.48px;">order_id:</div>
<div style="position:absolute;left:1027.98px;top:728.32px;font:400 13.07px/16px 'Liberation Mono', monospace;color:#343741;white-space:pre;-webkit-text-stroke:0.12px #343741;transform:scaleY(1.08);transform-origin:0 11.48px;">717057</div>
<div style="position:absolute;left:1083.12px;top:724.30px;width:78.56px;height:21.4px;background:#E9EDF3;border-radius:3px"></div>
<div style="position:absolute;left:1087.12px;top:728.32px;font:400 13.07px/16px 'Liberation Mono', monospace;color:#343741;white-space:pre;-webkit-text-stroke:0.12px #343741;transform:scaleY(1.08);transform-origin:0 11.48px;">products:</div>
<div style="position:absolute;left:1166.1799999999998px;top:728.32px;font:400 13.07px/16px 'Liberation Mono', monospace;color:#343741;white-space:pre;-webkit-text-stroke:0.12px #343741;transform:scaleY(1.08);transform-origin:0 11.48px;">{ "base_price":</div>
</div>
</body></html>
